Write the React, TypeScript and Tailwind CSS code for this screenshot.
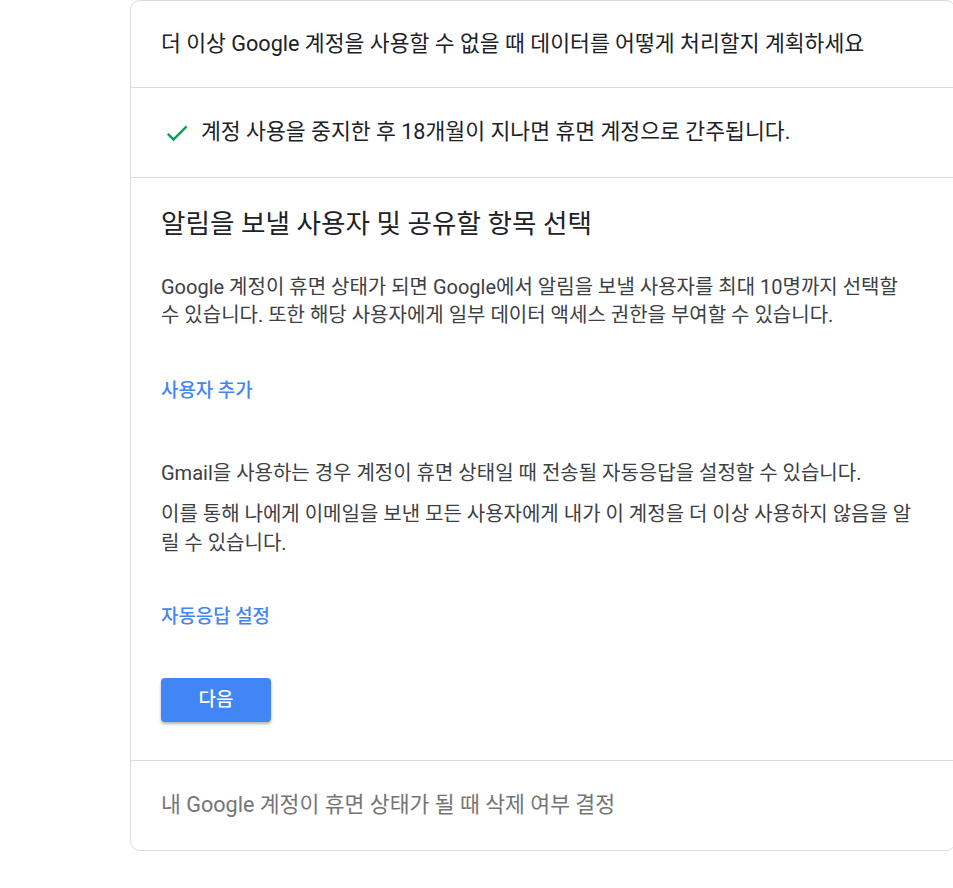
import React from "react";

const font = { fontFamily: 'Roboto, "Noto Sans CJK KR", sans-serif' };

function CheckIcon() {
  return (
    <svg width="28" height="28" viewBox="0 0 24 24" aria-hidden className="shrink-0">
      <path d="M9 16.17L4.83 12l-1.42 1.41L9 19 21 7l-1.41-1.41z" fill="#0f9d58" />
    </svg>
  );
}

export default function App() {
  return (
    <div className="min-h-[888px] w-full overflow-hidden bg-white" style={font}>
      <div className="ml-[130px] w-[826px] rounded-[10px] border border-[#dadce0] text-[#202124]">
        <div className="flex h-[87px] items-center border-b border-[#dadce0] pl-[30px] text-[21.6px]">
          더 이상 Google 계정을 사용할 수 없을 때 데이터를 어떻게 처리할지 계획하세요
        </div>

        <div className="flex h-[90px] items-center gap-[10px] border-b border-[#dadce0] pl-[32px] text-[21.6px]">
          <CheckIcon />
          <span>계정 사용을 중지한 후 18개월이 지나면 휴면 계정으로 간주됩니다.</span>
        </div>

        <div className="border-b border-[#dadce0] pb-[38px] pl-[30px] pr-[35px] pt-[28px]">
          <h2 className="text-[26.6px] leading-[36px]">알림을 보낼 사용자 및 공유할 항목 선택</h2>
          <p className="mt-[31px] text-[20px] leading-[28px] text-[#3c4043]">
            Google 계정이 휴면 상태가 되면 Google에서 알림을 보낼 사용자를 최대 10명까지 선택할 수 있습니다. 또한 해당 사용자에게 일부 데이터 액세스 권한을 부여할 수 있습니다.
          </p>
          <div className="mt-[48px] text-[18.9px] font-medium leading-[28px] text-[#4285f4]">사용자 추가</div>

          <p className="mt-[54px] text-[20px] leading-[28px] text-[#3c4043]">
            Gmail을 사용하는 경우 계정이 휴면 상태일 때 전송될 자동응답을 설정할 수 있습니다.
          </p>
          <p className="mt-[13px] text-[20px] leading-[29px] text-[#3c4043]">
            이를 통해 나에게 이메일을 보낸 모든 사용자에게 내가 이 계정을 더 이상 사용하지 않음을 알릴 수 있습니다.
          </p>
          <div className="mt-[45px] text-[18.9px] font-medium leading-[28px] text-[#4285f4]">자동응답 설정</div>

          <button className="mt-[47px] flex h-[44px] w-[110px] items-center justify-center rounded-[4px] bg-[#4285f4] text-[18.9px] font-medium text-white shadow-[0_2px_3px_rgba(0,0,0,0.3)]">
            다음
          </button>
        </div>

        <div className="flex h-[89px] items-center pl-[30px] text-[21.6px] text-[#757575]">
          내 Google 계정이 휴면 상태가 될 때 삭제 여부 결정
        </div>
      </div>
    </div>
  );
}
